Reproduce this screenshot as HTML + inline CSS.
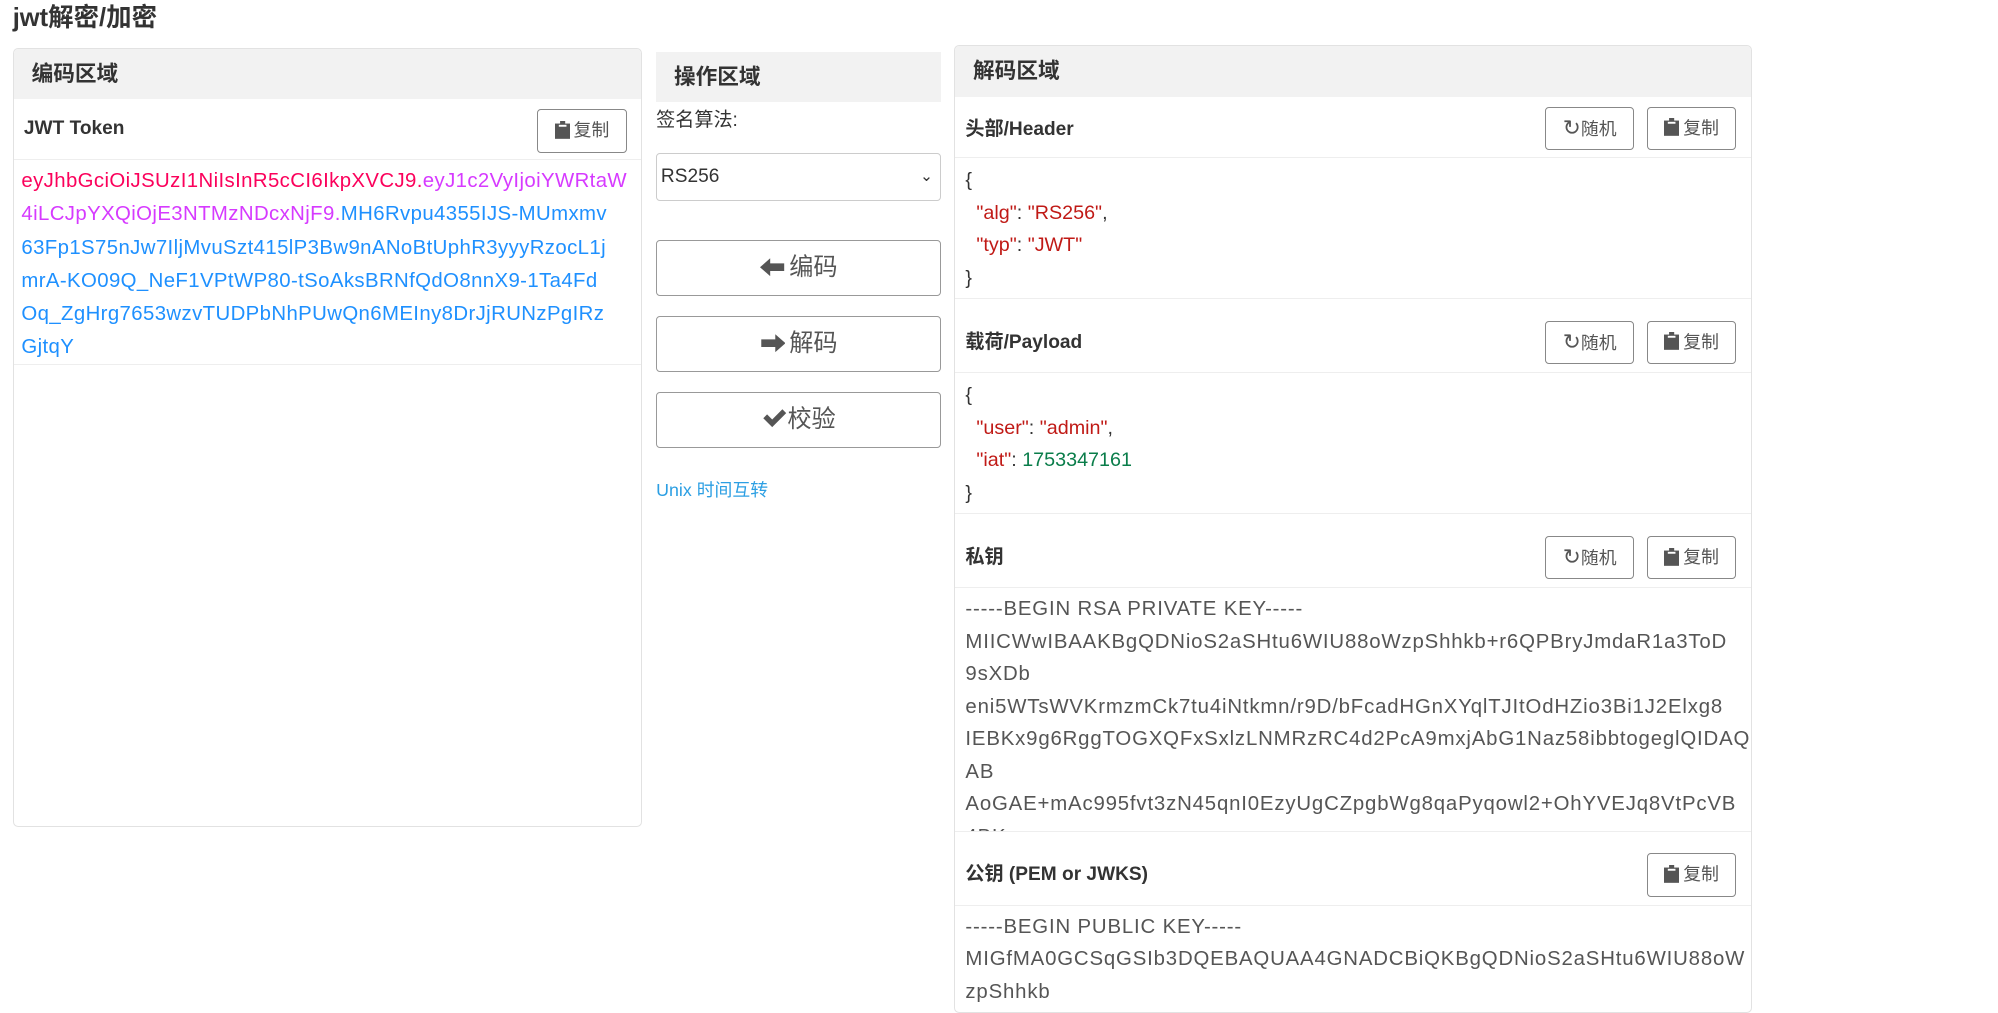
<!DOCTYPE html>
<html><head><meta charset="utf-8"><style>
html{zoom:1.274}
body{margin:0;width:1570px;height:778px;overflow:hidden;background:#fff;font-family:"Liberation Sans","Noto Sans CJK SC",sans-serif;color:#333;position:relative}
.abs{position:absolute}
h1{position:absolute;left:10px;top:-2px;margin:0;font-size:20px;font-weight:bold;color:#333}
.panel{position:absolute;border:1px solid #e2e2e2;border-radius:4px;box-sizing:border-box;overflow:hidden}
.ph{background:#f2f2f2;height:39px;line-height:39px;padding-left:14px;font-size:17px;font-weight:bold;color:#333}
.row{position:absolute;left:0;right:0;border-bottom:1px solid #eee;box-sizing:border-box}
.lbl{position:absolute;left:8px;font-size:15px;font-weight:bold;color:#333}
.btn{position:absolute;border:1px solid #888;border-radius:3px;background:#fff;font-size:14px;color:#555;box-sizing:border-box;height:34px;width:70px;line-height:32px;text-align:center}
.ic{display:inline-block;vertical-align:-2px;margin-right:3px}
.code{position:absolute;left:8px;font-size:15.5px;line-height:25.5px;color:#333;white-space:nowrap}
.k{color:#c01a16}.n{color:#0a7d4a}
.key{letter-spacing:0.65px;font-size:16px}
.big{position:absolute;left:515px;width:224px;height:44px;border:1px solid #999;border-radius:3px;box-sizing:border-box;text-align:center;line-height:42px;font-size:19px;color:#555}
</style></head><body>
<h1>jwt解密/加密</h1>

<div class="panel" style="left:10px;top:38px;width:494px;height:611px">
 <div class="ph">编码区域</div>
 <div class="row" style="top:39px;height:48px">
  <div class="lbl" style="top:15px">JWT Token</div>
  <div class="btn" style="left:411px;top:8px"><svg class="ic" width="12" height="14" viewBox="0 0 12 14"><rect x="0" y="2" width="12" height="12" fill="#555"/><rect x="4" y="0" width="4" height="4" fill="#555"/><rect x="3" y="3" width="6" height="1.5" fill="#fff"/></svg>复制</div>
 </div>
 <div class="row" style="top:87px;height:161px">
  <div style="position:absolute;left:6px;top:4px;font-size:16px;line-height:26px;white-space:nowrap;color:#1e90ff;letter-spacing:0.3px"><span style="color:#fb015b">eyJhbGciOiJSUzI1NiIsInR5cCI6IkpXVCJ9.</span><span style="color:#d63aff">eyJ1c2VyIjoiYWRtaW<br>4iLCJpYXQiOjE3NTMzNDcxNjF9.</span>MH6Rvpu4355IJS-MUmxmv<br>63Fp1S75nJw7IljMvuSzt415lP3Bw9nANoBtUphR3yyyRzocL1j<br>mrA-KO09Q_NeF1VPtWP80-tSoAksBRNfQdO8nnX9-1Ta4Fd<br>Oq_ZgHrg7653wzvTUDPbNhPUwQn6MEIny8DrJjRUNzPgIRz<br>GjtqY</div>
 </div>
</div>

<div class="abs" style="left:515px;top:41px;width:224px;height:39px;background:#f2f2f2;line-height:39px;padding-left:14px;box-sizing:border-box;font-size:17px;font-weight:bold">操作区域</div>
<div class="abs" style="left:515px;top:82px;font-size:15px">签名算法:</div>
<div class="abs" style="left:515px;top:120px;width:224px;height:38px;border:1px solid #ccc;border-radius:3px;box-sizing:border-box;font-size:15px;line-height:36px;padding-left:3px">RS256<span style="position:absolute;right:6px;top:0;font-size:12px">&#8964;</span></div>
<div class="big" style="top:188px"><svg class="ic" width="20" height="16" viewBox="0 0 20 16"><path d="M0 8 L8 1 V5 H19 V11 H8 V15 Z" fill="#555"/></svg>编码</div>
<div class="big" style="top:248px"><svg class="ic" width="20" height="16" viewBox="0 0 20 16"><path d="M20 8 L12 1 V5 H1 V11 H12 V15 Z" fill="#555"/></svg>解码</div>
<div class="big" style="top:308px"><svg width="20" height="16" viewBox="0 0 20 16" style="vertical-align:-1px"><path d="M1 8 L4 5 L8 9 L16 1 L19 4 L8 15 Z" fill="#555"/></svg>校验</div>
<div class="abs" style="left:515px;top:374px;font-size:14px;color:#2c9fe3">Unix 时间互转</div>

<div class="panel" style="left:749px;top:35px;width:626px;height:760px">
 <div class="ph" style="height:40px;line-height:40px">解码区域</div>
 <div class="row" style="top:40px;height:48px"><div class="lbl" style="top:13px">头部/Header</div>
  <div class="btn" style="left:463px;top:8px"><span style="font-size:17px">&#8635;</span>随机</div>
  <div class="btn" style="left:543px;top:8px"><svg class="ic" width="12" height="14" viewBox="0 0 12 14"><rect x="0" y="2" width="12" height="12" fill="#555"/><rect x="4" y="0" width="4" height="4" fill="#555"/><rect x="3" y="3" width="6" height="1.5" fill="#fff"/></svg>复制</div></div>
 <div class="row" style="top:88px;height:111px"><div class="code" style="top:5px">{<br>&nbsp;&nbsp;<span class="k">"alg"</span>: <span class="k">"RS256"</span>,<br>&nbsp;&nbsp;<span class="k">"typ"</span>: <span class="k">"JWT"</span><br>}</div></div>
 <div class="row" style="top:199px;height:58px"><div class="lbl" style="top:21px">载荷/Payload</div>
  <div class="btn" style="left:463px;top:17px"><span style="font-size:17px">&#8635;</span>随机</div>
  <div class="btn" style="left:543px;top:17px"><svg class="ic" width="12" height="14" viewBox="0 0 12 14"><rect x="0" y="2" width="12" height="12" fill="#555"/><rect x="4" y="0" width="4" height="4" fill="#555"/><rect x="3" y="3" width="6" height="1.5" fill="#fff"/></svg>复制</div></div>
 <div class="row" style="top:257px;height:111px"><div class="code" style="top:5px">{<br>&nbsp;&nbsp;<span class="k">"user"</span>: <span class="k">"admin"</span>,<br>&nbsp;&nbsp;<span class="k">"iat"</span>: <span class="n">1753347161</span><br>}</div></div>
 <div class="row" style="top:368px;height:58px"><div class="lbl" style="top:21px">私钥</div>
  <div class="btn" style="left:463px;top:17px"><span style="font-size:17px">&#8635;</span>随机</div>
  <div class="btn" style="left:543px;top:17px"><svg class="ic" width="12" height="14" viewBox="0 0 12 14"><rect x="0" y="2" width="12" height="12" fill="#555"/><rect x="4" y="0" width="4" height="4" fill="#555"/><rect x="3" y="3" width="6" height="1.5" fill="#fff"/></svg>复制</div></div>
 <div class="row" style="top:426px;height:191px;overflow:hidden"><div class="code key" style="top:4px;color:#555">-----BEGIN RSA PRIVATE KEY-----<br>MIICWwIBAAKBgQDNioS2aSHtu6WIU88oWzpShhkb+r6QPBryJmdaR1a3ToD<br>9sXDb<br>eni5WTsWVKrmzmCk7tu4iNtkmn/r9D/bFcadHGnXYqlTJItOdHZio3Bi1J2Elxg8<br>IEBKx9g6RggTOGXQFxSxlzLNMRzRC4d2PcA9mxjAbG1Naz58ibbtogeglQIDAQ<br>AB<br>AoGAE+mAc995fvt3zN45qnI0EzyUgCZpgbWg8qaPyqowl2+OhYVEJq8VtPcVB<br>4BK</div></div>
 <div class="row" style="top:617px;height:58px"><div class="lbl" style="top:21px">公钥 (PEM or JWKS)</div>
  <div class="btn" style="left:543px;top:17px"><svg class="ic" width="12" height="14" viewBox="0 0 12 14"><rect x="0" y="2" width="12" height="12" fill="#555"/><rect x="4" y="0" width="4" height="4" fill="#555"/><rect x="3" y="3" width="6" height="1.5" fill="#fff"/></svg>复制</div></div>
 <div class="row" style="top:675px;height:85px;border:0"><div class="code key" style="top:4px;color:#555">-----BEGIN PUBLIC KEY-----<br>MIGfMA0GCSqGSIb3DQEBAQUAA4GNADCBiQKBgQDNioS2aSHtu6WIU88oW<br>zpShhkb</div></div>
</div>
</body></html>
